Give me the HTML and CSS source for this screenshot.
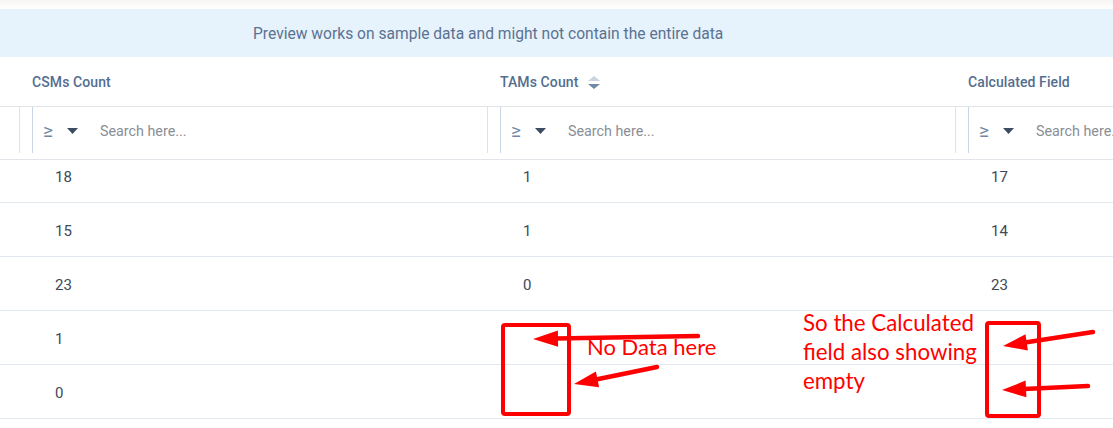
FILE: index.html
```html
<!DOCTYPE html>
<html>
<head>
<meta charset="utf-8">
<link rel="stylesheet" href="styles.css">
</head>
<body>
<div class="page">
  <div class="topgap"></div>
  <div class="banner">Preview works on sample data and might not contain the entire data</div>
  <div class="table">
    <div class="hrow">
      <div class="hcell"></div>
      <div class="hcell">CSMs Count</div>
      <div class="hcell">TAMs Count
        <svg class="sort" width="12" height="14" viewBox="0 0 12 14"><path d="M0 5 L6 0 L12 5 Z" fill="#cbd3dc"/><path d="M0 8 L12 8 L6 13 Z" fill="#7289a6"/></svg>
      </div>
      <div class="hcell">Calculated Field</div>
    </div>
    <div class="frow">
      <div class="fcell"></div>
      <div class="fcell"><div class="filter"><span class="op">≥</span><svg class="caret" width="11" height="6" viewBox="0 0 11 6"><path d="M0 0 L11 0 L5.5 6 Z" fill="#3b4c63"/></svg><span class="ph">Search here...</span></div></div>
      <div class="fcell"><div class="filter"><span class="op">≥</span><svg class="caret" width="11" height="6" viewBox="0 0 11 6"><path d="M0 0 L11 0 L5.5 6 Z" fill="#3b4c63"/></svg><span class="ph">Search here...</span></div></div>
      <div class="fcell"><div class="filter"><span class="op">≥</span><svg class="caret" width="11" height="6" viewBox="0 0 11 6"><path d="M0 0 L11 0 L5.5 6 Z" fill="#3b4c63"/></svg><span class="ph">Search here...</span></div></div>
    </div>
    <div class="body">
      <div class="rows">
        <div class="row"><div class="cell"></div><div class="cell">18</div><div class="cell">1</div><div class="cell">17</div></div>
        <div class="row"><div class="cell"></div><div class="cell">15</div><div class="cell">1</div><div class="cell">14</div></div>
        <div class="row"><div class="cell"></div><div class="cell">23</div><div class="cell">0</div><div class="cell">23</div></div>
        <div class="row"><div class="cell"></div><div class="cell">1</div><div class="cell"></div><div class="cell"></div></div>
        <div class="row"><div class="cell"></div><div class="cell">0</div><div class="cell"></div><div class="cell"></div></div>
      </div>
    </div>
  </div>

  <svg class="annot" width="1113" height="428" viewBox="0 0 1113 428">
    <g fill="none" stroke="#ff0000" stroke-width="4">
      <rect x="503" y="325" width="66" height="89" rx="2"/>
      <rect x="987" y="323" width="52" height="93" rx="2"/>
    </g>
    <g stroke="#ff0000" stroke-width="4.5" stroke-linecap="round">
      <line x1="698" y1="336" x2="556" y2="338.5"/>
      <line x1="657" y1="367" x2="596" y2="379.5"/>
      <line x1="1093" y1="332" x2="1025" y2="342.5"/>
      <line x1="1088" y1="386" x2="1024" y2="389"/>
    </g>
    <g fill="#ff0000">
      <polygon points="533,339 558.1,346.8 557.9,330.5"/>
      <polygon points="574,384 599.1,387.2 595.9,371.4"/>
      <polygon points="1003,346 1027.9,350.4 1025.5,334.2"/>
      <polygon points="1002,390 1026.4,397.2 1025.6,380.6"/>
    </g>
  </svg>
  <div class="note note1">No Data here</div>
  <div class="note note2">So the Calculated<br>field also showing<br>empty</div>
</div>
</body>
</html>
```
FILE: styles.css
```css
* { box-sizing: border-box; }
html, body { margin: 0; padding: 0; background: #ffffff; }
body { width: 1113px; height: 428px; overflow: hidden; }

.page {
  position: relative;
  width: 1113px;
  height: 428px;
  overflow: hidden;
  font-family: Roboto, "Liberation Sans", sans-serif;
}

.topgap {
  height: 9px;
  background: linear-gradient(#f7f5f4, #ffffff);
}

.banner {
  height: 48px;
  background: #e6f2fc;
  color: #5b7392;
  font-size: 15.6px;
  display: flex;
  align-items: center;
  padding-left: 253px;
  padding-top: 1px;
}

.table { width: 1424px; }

.hrow, .frow, .row {
  display: grid;
  grid-template-columns: 20px 468px 468px 468px;
}

.hrow {
  height: 50px;
  border-bottom: 1px solid #e1e5ea;
}

.hcell {
  display: flex;
  align-items: center;
  padding-left: 12px;
  padding-top: 1px;
  font-size: 14px;
  font-weight: 500;
  color: #546e8f;
  letter-spacing: 0.1px;
}

.sort { margin-left: 10px; margin-top: 1px; }

.frow {
  height: 53px;
  border-bottom: 1px solid #e1e5ea;
}

.fcell {
  height: 46px;
  border-right: 1px solid #dde3ea;
  padding-left: 12px;
}

.filter {
  height: 46px;
  border-left: 1px solid #c9d6e6;
  display: flex;
  align-items: center;
  padding-left: 10px;
}

.op {
  font-size: 19px;
  color: #6e87a6;
  width: 24px;
  margin-top: 1px;
}

.caret { margin-right: 22px; margin-top: 1px; }

.ph {
  font-size: 14.3px;
  color: #8a8e95;
  margin-top: 1px;
}

.body {
  height: 259px;
  overflow: hidden;
}

.rows { margin-top: -11px; }

.row {
  height: 54px;
  border-bottom: 1px solid #e2e8f0;
}

.cell {
  display: flex;
  align-items: center;
  padding-left: 35px;
  padding-top: 3px;
  font-size: 15px;
  color: #3d4858;
}

.annot {
  position: absolute;
  left: 0;
  top: 0;
}

.note {
  position: absolute;
  font-family: Lato, "Open Sans", sans-serif;
  font-size: 22.3px;
  line-height: 29px;
  color: #ff0000;
  white-space: nowrap;
}

.note1 { left: 587px; top: 332px; font-size: 22px; }
.note2 { left: 803px; top: 308px; }
```
